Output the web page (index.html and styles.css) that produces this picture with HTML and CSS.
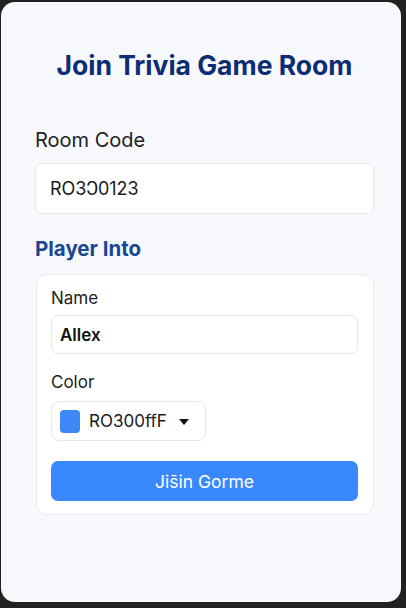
FILE: index.html
```html
<!DOCTYPE html>
<html lang="en">
<head>
<meta charset="utf-8">
<title>Join Trivia Game Room</title>
<link rel="stylesheet" href="styles.css">
</head>
<body>
<main class="card">
  <h1 class="title">Join Trivia Game Room</h1>
  <label class="label-lg" for="room">Room Code</label>
  <div class="field field-room" id="room">RO3Ↄ0123</div>
  <h2 class="section">Player Into</h2>
  <section class="panel">
    <label class="label" for="name">Name</label>
    <div class="field field-name" id="name">Allex</div>
    <label class="label label-color">Color</label>
    <div class="select">
      <span class="swatch"></span>
      <span class="select-text">RO300ffF</span>
      <svg class="caret" width="10" height="6" viewBox="0 0 10 6"><path d="M0 0h10L5 6z" fill="#111"/></svg>
    </div>
    <button class="btn">Jis̄in Gorme</button>
  </section>
</main>
</body>
</html>
```
FILE: styles.css
```css
* { box-sizing: border-box; }
html, body { margin: 0; padding: 0; }
body {
  background: #212121;
  width: 406px;
  height: 608px;
  font-family: Inter, "Liberation Sans", sans-serif;
  color: #1f2328;
}
.card {
  margin: 2px 0 0 1px;
  width: 400px;
  height: 600px;
  background: #f7f8fc;
  border-radius: 14px;
  padding: 47px 27px 0 34px;
  display: flex;
  flex-direction: column;
}
.title {
  margin: 0;
  font-size: 26.5px;
  line-height: 32px;
  font-weight: 700;
  color: #0c2d74;
  text-align: center;
}
.label-lg {
  display: block;
  margin-top: 47px;
  font-size: 20px;
  line-height: 24px;
  color: #222;
}
.field {
  background: #fff;
  border: 1px solid #e5e7eb;
  border-radius: 7px;
  display: flex;
  align-items: center;
}
.field-room {
  margin-top: 11px;
  height: 51px;
  padding-left: 14px;
  font-size: 18px;
  color: #1a1a1a;
}
.section {
  margin: 22px 0 0;
  font-size: 20.5px;
  line-height: 26px;
  font-weight: 700;
  color: #1a4791;
}
.panel {
  margin-top: 12px;
  margin-left: 1px;
  width: 338px;
  background: #fff;
  border: 1px solid #e9ebef;
  border-radius: 11px;
  padding: 12px 15px 13px 14px;
  display: flex;
  flex-direction: column;
  align-items: flex-start;
}
.label {
  display: block;
  font-size: 17px;
  line-height: 22px;
  color: #222;
}
.field-name {
  margin-top: 6px;
  width: 307px;
  height: 39px;
  padding-left: 8px;
  font-size: 17px;
  font-weight: 600;
  color: #111;
}
.label-color { margin-top: 17px; }
.select {
  margin-top: 8px;
  width: 155px;
  height: 40px;
  background: #fff;
  border: 1px solid #e5e7eb;
  border-radius: 8px;
  display: flex;
  align-items: center;
  padding-left: 8px;
}
.swatch {
  width: 20px;
  height: 23px;
  border-radius: 4px;
  background: #3d87f7;
}
.select-text {
  margin-left: 9px;
  font-size: 17px;
  color: #1a1a1a;
}
.caret { margin-left: 12px; margin-top: 1px; }
.btn {
  margin-top: 20px;
  width: 307px;
  height: 40px;
  border: 0;
  border-radius: 7px;
  background: #3a88fd;
  color: #fff;
  font-family: Inter, "Liberation Sans", sans-serif;
  font-size: 17.5px;
  padding: 0;
}
```
